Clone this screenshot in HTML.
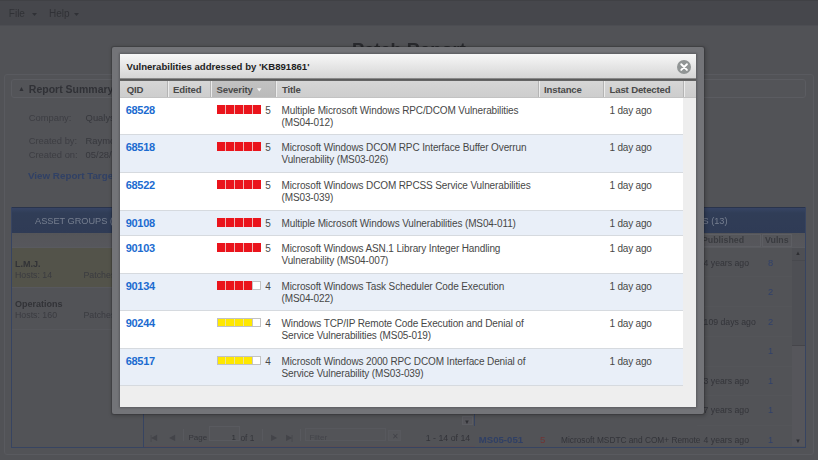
<!DOCTYPE html>
<html><head><meta charset="utf-8"><style>
*{box-sizing:border-box;margin:0;padding:0}
html,body{width:818px;height:460px;overflow:hidden;background:#55565b;font-family:"Liberation Sans",sans-serif;font-size:9.6px;color:#2c2d31}
.a{position:absolute}
.t{position:absolute;white-space:nowrap;line-height:12px}
.lbl{color:#404146}
.val{color:#3a3b40}
.hc{position:absolute;top:0;height:100%}
.hc span{position:absolute;left:6px;top:2.5px;font-weight:bold;color:#494949;letter-spacing:-0.15px;line-height:12px;white-space:nowrap}
.row{position:absolute;left:0;width:563px;border-bottom:1px solid #d6dadf}
.row.w{background:#fff}
.row.b{background:#e9eff8}
.qid{position:absolute;left:5.7px;top:6px;font-size:11px;letter-spacing:-0.3px;font-weight:bold;color:#1c6bd0;line-height:12px}
.bar{position:absolute;left:97px;top:7px;width:44px;height:9px;border:1px solid #c2c2c2;background:#fff}
.seg{position:absolute;top:-1px;height:9px;width:8px}
.num{position:absolute;left:145.3px;top:7px;font-size:10px;color:#4a4a4a;line-height:12px}
.ttl{position:absolute;left:161.5px;top:7px;font-size:10px;letter-spacing:-0.12px;color:#474747;line-height:11.8px;white-space:nowrap}
.ld{position:absolute;left:489.5px;top:7px;font-size:10px;letter-spacing:-0.2px;color:#474747;line-height:12px;white-space:nowrap}
</style></head><body>
<div class="a" style="left:0;top:0;width:818px;height:460px;background:#55565b;filter:brightness(0.95)">
<div class="a" style="left:0px;top:0px;width:818px;height:25px;background:#4a4b50;border-top:1px solid #434449"></div>
<div class="a" style="left:0px;top:25px;width:818px;height:1px;background:#505156"></div>
<div class="t" style="left:8.8px;top:7.5px;color:#333439;font-size:10px">File</div>
<svg class="a" style="left:31.5px;top:13px" width="5" height="3"><path d="M0 0H5L2.5 3Z" fill="#333439"/></svg>
<div class="t" style="left:49px;top:7.5px;color:#333439;font-size:10px">Help</div>
<svg class="a" style="left:73.5px;top:13px" width="5" height="3"><path d="M0 0H5L2.5 3Z" fill="#333439"/></svg>
<div class="t" style="left:352px;top:39.3px;font-size:18.3px;line-height:22px;font-weight:bold;color:#2b2c30">Patch Report</div>
<div class="a" style="left:3.5px;top:74px;width:810px;height:381px;border:1px solid #5e5f64;border-radius:3px;background:#56575c"></div>
<div class="a" style="left:11px;top:79px;width:795px;height:19px;border:1px solid #606166;border-radius:3px;background:#57585d"></div>
<div class="t" style="left:18px;top:83px;color:#333439"><span style="font-size:7px;position:relative;top:-1.5px">&#9650;</span></div>
<div class="t" style="left:28.8px;top:82px;font-size:10.5px;line-height:14px;font-weight:bold;color:#333439">Report Summary</div>
<div class="t lbl" style="left:28.7px;top:111.5px;font-size:9.4px">Company:</div>
<div class="t val" style="left:85.6px;top:111.5px;font-size:9.4px">Qualys, Inc.</div>
<div class="t lbl" style="left:28.7px;top:135px;font-size:9.4px">Created by:</div>
<div class="t val" style="left:85.6px;top:135px;font-size:9.4px">Raymond</div>
<div class="t lbl" style="left:28.7px;top:149px;font-size:9.4px">Created on:</div>
<div class="t val" style="left:85.6px;top:149px;font-size:9.4px">05/28/2010</div>
<div class="t" style="left:28px;top:169.5px;font-weight:bold;font-size:9.8px;color:#33446a">View Report Target</div>
<div class="a" style="left:11px;top:207px;width:795px;height:26px;background:linear-gradient(#3a4869,#33405c 5px,#313e59);border-top:1px solid #2c3750"></div>
<div class="t" style="left:35px;top:215px;color:#7c8597;font-size:9.2px">ASSET GROUPS (2)</div>
<div class="t" style="left:666.6px;top:215px;color:#7c8597;font-size:9.2px">PATCHES (13)</div>
<div class="a" style="left:12px;top:233px;width:793px;height:15px;background:linear-gradient(#58595e,#5b5c61);border-bottom:1px solid #5e5f64"></div>
<div class="a" style="left:12px;top:248px;width:131px;height:39px;background:#57574e"></div>
<div class="a" style="left:12px;top:287px;width:131px;height:1px;background:#5c5d62"></div>
<div class="a" style="left:12px;top:328.5px;width:131px;height:1px;background:#5b5c61"></div>
<div class="t" style="left:15px;top:257.5px;font-weight:bold;font-size:9px;color:#35363a">L.M.J.</div>
<div class="t" style="left:15px;top:268.5px;font-size:8.8px;color:#3e3f44">Hosts: 14</div>
<div class="t" style="left:83.5px;top:268.5px;font-size:8.8px;color:#3e3f44">Patches: 8</div>
<div class="t" style="left:15px;top:297.5px;font-weight:bold;font-size:9px;color:#35363a">Operations</div>
<div class="t" style="left:15px;top:308.5px;font-size:8.8px;color:#3e3f44">Hosts: 160</div>
<div class="t" style="left:83.5px;top:308.5px;font-size:8.8px;color:#3e3f44">Patches: 2</div>
<div class="a" style="left:11px;top:207px;width:1px;height:240px;background:#3a4866"></div>
<div class="a" style="left:11px;top:446.5px;width:795px;height:1px;background:#3a4866"></div>
<div class="a" style="left:805px;top:207px;width:1px;height:240px;background:#3a4866"></div>
<div class="a" style="left:142.5px;top:233px;width:1px;height:214px;background:#3a4866"></div>
<div class="a" style="left:474.3px;top:233px;width:1px;height:214px;background:#3a4866"></div>
<div class="a" style="left:143.5px;top:426px;width:331px;height:20.5px;background:#56575c;border-bottom:1px solid #5d5257"></div>
<div class="t" style="left:150px;top:431.5px;font-size:8px;color:#47484d;letter-spacing:-1px">|&#9664;</div>
<div class="t" style="left:168.5px;top:431.5px;font-size:8px;color:#47484d">&#9664;</div>
<div class="a" style="left:183px;top:429px;width:1px;height:12px;background:#5d5e63"></div>
<div class="t" style="left:188.4px;top:432px;font-size:8px;color:#38393e">Page</div>
<div class="a" style="left:209px;top:426px;width:31px;height:15px;border:1px solid #5e5f64;background:#57585d"></div>
<div class="t" style="left:231.5px;top:432px;font-size:8px;color:#303136">1</div>
<div class="t" style="left:240.4px;top:432px;font-size:8.4px;color:#38393e">of 1</div>
<div class="a" style="left:262px;top:429px;width:1px;height:12px;background:#5d5e63"></div>
<div class="t" style="left:271.3px;top:431.5px;font-size:8px;color:#47484d">&#9654;</div>
<div class="t" style="left:286px;top:431.5px;font-size:8px;color:#47484d;letter-spacing:-1px">&#9654;|</div>
<div class="a" style="left:300px;top:429px;width:1px;height:12px;background:#5d5e63"></div>
<div class="a" style="left:305px;top:428px;width:81px;height:13px;border:1px solid #5c5d62;background:#57585d"></div>
<div class="t" style="left:309.4px;top:432px;font-size:8px;color:#47484d">Filter</div>
<div class="a" style="left:388.3px;top:430px;width:13.2px;height:11px;border:1px solid #5c5d62;background:#595a5f"></div>
<div class="t" style="left:391.5px;top:430.5px;font-size:8px;color:#45464b">&#10005;</div>
<div class="t" style="left:425.7px;top:432px;font-size:8.8px;color:#36373c">1 - 14 of 14</div>
<div class="a" style="left:461.6px;top:416px;width:11px;height:9px;border:1px solid #606166;background:#5a5b60"></div>
<div class="t" style="left:464px;top:415.5px;font-size:6px;color:#303136">&#9660;</div>
<div class="t" style="left:702px;top:234.3px;font-weight:bold;color:#3d3e43;font-size:8.8px">Published</div>
<div class="a" style="left:697px;top:234px;width:64px;height:13px;border:1px solid #626368;border-left:none"></div>
<div class="a" style="left:762px;top:234px;width:30px;height:13px;border:1px solid #626368"></div>
<div class="t" style="left:765px;top:234.3px;font-weight:bold;color:#3d3e43;font-size:8.8px;width:27px;overflow:hidden">Vulns</div>
<div class="a" style="left:697px;top:275.9px;width:95px;height:1px;background:#58595e"></div>
<div class="a" style="left:697px;top:305.5px;width:95px;height:1px;background:#58595e"></div>
<div class="a" style="left:697px;top:336px;width:95px;height:1px;background:#58595e"></div>
<div class="a" style="left:697px;top:365.6px;width:95px;height:1px;background:#58595e"></div>
<div class="a" style="left:697px;top:395.4px;width:95px;height:1px;background:#58595e"></div>
<div class="a" style="left:697px;top:425px;width:95px;height:1px;background:#58595e"></div>
<div class="t" style="left:703.6px;top:256.7px;color:#36373c;font-size:8.7px">4 years ago</div>
<div class="t" style="left:768px;top:256.7px;color:#34456f;font-size:9.4px">8</div>
<div class="t" style="left:768px;top:286.2px;color:#34456f;font-size:9.4px">2</div>
<div class="t" style="left:703.6px;top:315.7px;color:#36373c;font-size:8.7px">109 days ago</div>
<div class="t" style="left:768px;top:315.7px;color:#34456f;font-size:9.4px">2</div>
<div class="t" style="left:768px;top:345.2px;color:#34456f;font-size:9.4px">1</div>
<div class="t" style="left:703.6px;top:374.7px;color:#36373c;font-size:8.7px">3 years ago</div>
<div class="t" style="left:768px;top:374.7px;color:#34456f;font-size:9.4px">1</div>
<div class="t" style="left:703.6px;top:404.2px;color:#36373c;font-size:8.7px">7 years ago</div>
<div class="t" style="left:768px;top:404.2px;color:#34456f;font-size:9.4px">1</div>
<div class="t" style="left:703.6px;top:433.7px;color:#36373c;font-size:8.7px">4 years ago</div>
<div class="t" style="left:768px;top:433.7px;color:#34456f;font-size:9.4px">1</div>
<div class="t" style="left:478.8px;top:434px;font-weight:bold;color:#32436a">MS05-051</div>
<div class="t" style="left:540px;top:434px;color:#763838">5</div>
<div class="t" style="left:561px;top:434px;color:#36373c;font-size:8.3px;width:141px;overflow:hidden">Microsoft MSDTC and COM+ Remote</div>
<div class="a" style="left:792px;top:248px;width:13px;height:198px;background:#5a5b60"></div>
<div class="a" style="left:792px;top:248px;width:13px;height:98px;background:#525358;border-bottom:1px solid #49494e"></div>
<div class="t" style="left:795px;top:246.5px;font-size:6px;color:#303136">&#9650;</div>
<div class="a" style="left:792px;top:259.5px;width:13px;height:1px;background:#4c4d52"></div>
<div class="t" style="left:795px;top:435px;font-size:6px;color:#303136">&#9660;</div>
</div>
<div class="a" style="left:112px;top:46.5px;width:592px;height:367.5px;background:#737478;border-radius:2px;box-shadow:1px 1px 4px 1px rgba(0,0,0,0.2),0 0 1px 0.5px rgba(0,0,0,0.15)"></div>
<div class="a" style="left:120px;top:54px;width:576px;height:352.5px;background:#eeeeee;overflow:hidden;box-shadow:0 0 2px 1px rgba(0,0,0,0.22)">
<div class="a" style="left:0px;top:0px;width:576px;height:24px;background:linear-gradient(#f7f7f7,#d6d6d6)"></div>
<div class="t" style="left:6.6px;top:6.5px;font-weight:bold;color:#1e1e1e">Vulnerabilities addressed by 'KB891861'</div>
<div class="a" style="left:557px;top:5.6px;width:14.2px;height:14.2px;border-radius:50%;background:#919595"></div>
<svg class="a" style="left:557px;top:5.6px" width="14.2" height="14.2" viewBox="0 0 14 14"><path d="M4.2 4.2L9.8 9.8M9.8 4.2L4.2 9.8" stroke="#fff" stroke-width="1.9" stroke-linecap="round"/></svg>
<div class="a" style="left:0px;top:24px;width:576px;height:1px;background:#8a8a8a"></div>
<div class="a" style="left:0px;top:25px;width:576px;height:1px;background:#5b5b5b"></div>
<div class="a" style="left:0px;top:26px;width:576px;height:1px;background:#646464"></div>
<div class="a" style="left:0;top:27px;width:576px;height:17px;background:linear-gradient(#d6d6d6,#cdcdcd);border-bottom:1px solid #c2c2c2"><div class="hc" style="left:0px;width:47px;"><span style="left:6.8px">QID</span></div><div class="hc" style="left:47px;width:43px;border-left:1px solid #b4b4b4;box-shadow:inset 1px 0 0 #ececec;"><span style="left:5px">Edited</span></div><div class="hc" style="left:90px;width:65px;border-left:1px solid #b4b4b4;box-shadow:inset 1px 0 0 #ececec;background:linear-gradient(#c2c2c2,#bababa)"><span style="left:5.5px">Severity</span></div><div class="hc" style="left:155px;width:263px;border-left:1px solid #b4b4b4;box-shadow:inset 1px 0 0 #ececec;"><span style="left:6px">Title</span></div><div class="hc" style="left:418px;width:65px;border-left:1px solid #b4b4b4;box-shadow:inset 1px 0 0 #ececec;"><span style="left:5px">Instance</span></div><div class="hc" style="left:483px;width:80px;border-left:1px solid #b4b4b4;box-shadow:inset 1px 0 0 #ececec;"><span style="left:5.5px">Last Detected</span></div><div class="hc" style="left:563px;width:13px;border-left:1px solid #b4b4b4;box-shadow:inset 1px 0 0 #ececec;"><span style="left:-1px"></span></div><svg class="a" style="left:137px;top:7px" width="4.5" height="4" viewBox="0 0 4.5 4"><path d="M0 0.3H4.5L2.25 3.5Z" fill="#f4f4f4"/></svg></div>
<div class="row w" style="top:44.0px;height:37.0px"><span class="qid">68528</span><span class="bar"><i class="a" style="left:-1px;top:-1px;width:8px;height:9px;background:#ea141c"></i><i class="a" style="left:8px;top:-1px;width:8px;height:9px;background:#ea141c"></i><i class="a" style="left:7px;top:-1px;width:1px;height:9px;background:#efb4b4"></i><i class="a" style="left:17px;top:-1px;width:8px;height:9px;background:#ea141c"></i><i class="a" style="left:16px;top:-1px;width:1px;height:9px;background:#efb4b4"></i><i class="a" style="left:26px;top:-1px;width:8px;height:9px;background:#ea141c"></i><i class="a" style="left:25px;top:-1px;width:1px;height:9px;background:#efb4b4"></i><i class="a" style="left:35px;top:-1px;width:8px;height:9px;background:#ea141c"></i><i class="a" style="left:34px;top:-1px;width:1px;height:9px;background:#efb4b4"></i></span><span class="num">5</span><span class="ttl">Multiple Microsoft Windows RPC/DCOM Vulnerabilities<br>(MS04-012)</span><span class="ld">1 day ago</span></div>
<div class="row b" style="top:81.0px;height:38.0px"><span class="qid">68518</span><span class="bar"><i class="a" style="left:-1px;top:-1px;width:8px;height:9px;background:#ea141c"></i><i class="a" style="left:8px;top:-1px;width:8px;height:9px;background:#ea141c"></i><i class="a" style="left:7px;top:-1px;width:1px;height:9px;background:#efb4b4"></i><i class="a" style="left:17px;top:-1px;width:8px;height:9px;background:#ea141c"></i><i class="a" style="left:16px;top:-1px;width:1px;height:9px;background:#efb4b4"></i><i class="a" style="left:26px;top:-1px;width:8px;height:9px;background:#ea141c"></i><i class="a" style="left:25px;top:-1px;width:1px;height:9px;background:#efb4b4"></i><i class="a" style="left:35px;top:-1px;width:8px;height:9px;background:#ea141c"></i><i class="a" style="left:34px;top:-1px;width:1px;height:9px;background:#efb4b4"></i></span><span class="num">5</span><span class="ttl">Microsoft Windows DCOM RPC Interface Buffer Overrun<br>Vulnerability (MS03-026)</span><span class="ld">1 day ago</span></div>
<div class="row w" style="top:119.0px;height:38.0px"><span class="qid">68522</span><span class="bar"><i class="a" style="left:-1px;top:-1px;width:8px;height:9px;background:#ea141c"></i><i class="a" style="left:8px;top:-1px;width:8px;height:9px;background:#ea141c"></i><i class="a" style="left:7px;top:-1px;width:1px;height:9px;background:#efb4b4"></i><i class="a" style="left:17px;top:-1px;width:8px;height:9px;background:#ea141c"></i><i class="a" style="left:16px;top:-1px;width:1px;height:9px;background:#efb4b4"></i><i class="a" style="left:26px;top:-1px;width:8px;height:9px;background:#ea141c"></i><i class="a" style="left:25px;top:-1px;width:1px;height:9px;background:#efb4b4"></i><i class="a" style="left:35px;top:-1px;width:8px;height:9px;background:#ea141c"></i><i class="a" style="left:34px;top:-1px;width:1px;height:9px;background:#efb4b4"></i></span><span class="num">5</span><span class="ttl">Microsoft Windows DCOM RPCSS Service Vulnerabilities<br>(MS03-039)</span><span class="ld">1 day ago</span></div>
<div class="row b" style="top:157.0px;height:25.0px"><span class="qid">90108</span><span class="bar"><i class="a" style="left:-1px;top:-1px;width:8px;height:9px;background:#ea141c"></i><i class="a" style="left:8px;top:-1px;width:8px;height:9px;background:#ea141c"></i><i class="a" style="left:7px;top:-1px;width:1px;height:9px;background:#efb4b4"></i><i class="a" style="left:17px;top:-1px;width:8px;height:9px;background:#ea141c"></i><i class="a" style="left:16px;top:-1px;width:1px;height:9px;background:#efb4b4"></i><i class="a" style="left:26px;top:-1px;width:8px;height:9px;background:#ea141c"></i><i class="a" style="left:25px;top:-1px;width:1px;height:9px;background:#efb4b4"></i><i class="a" style="left:35px;top:-1px;width:8px;height:9px;background:#ea141c"></i><i class="a" style="left:34px;top:-1px;width:1px;height:9px;background:#efb4b4"></i></span><span class="num">5</span><span class="ttl">Multiple Microsoft Windows Vulnerabilities (MS04-011)</span><span class="ld">1 day ago</span></div>
<div class="row w" style="top:182.0px;height:38.0px"><span class="qid">90103</span><span class="bar"><i class="a" style="left:-1px;top:-1px;width:8px;height:9px;background:#ea141c"></i><i class="a" style="left:8px;top:-1px;width:8px;height:9px;background:#ea141c"></i><i class="a" style="left:7px;top:-1px;width:1px;height:9px;background:#efb4b4"></i><i class="a" style="left:17px;top:-1px;width:8px;height:9px;background:#ea141c"></i><i class="a" style="left:16px;top:-1px;width:1px;height:9px;background:#efb4b4"></i><i class="a" style="left:26px;top:-1px;width:8px;height:9px;background:#ea141c"></i><i class="a" style="left:25px;top:-1px;width:1px;height:9px;background:#efb4b4"></i><i class="a" style="left:35px;top:-1px;width:8px;height:9px;background:#ea141c"></i><i class="a" style="left:34px;top:-1px;width:1px;height:9px;background:#efb4b4"></i></span><span class="num">5</span><span class="ttl">Microsoft Windows ASN.1 Library Integer Handling<br>Vulnerability (MS04-007)</span><span class="ld">1 day ago</span></div>
<div class="row b" style="top:220.0px;height:37.0px"><span class="qid">90134</span><span class="bar"><i class="a" style="left:-1px;top:-1px;width:8px;height:9px;background:#ea141c"></i><i class="a" style="left:8px;top:-1px;width:8px;height:9px;background:#ea141c"></i><i class="a" style="left:7px;top:-1px;width:1px;height:9px;background:#efb4b4"></i><i class="a" style="left:17px;top:-1px;width:8px;height:9px;background:#ea141c"></i><i class="a" style="left:16px;top:-1px;width:1px;height:9px;background:#efb4b4"></i><i class="a" style="left:26px;top:-1px;width:8px;height:9px;background:#ea141c"></i><i class="a" style="left:25px;top:-1px;width:1px;height:9px;background:#efb4b4"></i><i class="a" style="left:34px;top:0;width:1px;height:7px;background:#c6c6c6"></i></span><span class="num">4</span><span class="ttl">Microsoft Windows Task Scheduler Code Execution<br>(MS04-022)</span><span class="ld">1 day ago</span></div>
<div class="row w" style="top:257.0px;height:38.0px"><span class="qid">90244</span><span class="bar"><i class="a" style="left:0px;top:0;width:7px;height:7px;background:#ffe800"></i><i class="a" style="left:8px;top:0;width:8px;height:7px;background:#ffe800"></i><i class="a" style="left:7px;top:0px;width:1px;height:7px;background:#e9e29a"></i><i class="a" style="left:17px;top:0;width:8px;height:7px;background:#ffe800"></i><i class="a" style="left:16px;top:0px;width:1px;height:7px;background:#e9e29a"></i><i class="a" style="left:26px;top:0;width:8px;height:7px;background:#ffe800"></i><i class="a" style="left:25px;top:0px;width:1px;height:7px;background:#e9e29a"></i><i class="a" style="left:34px;top:0;width:1px;height:7px;background:#c6c6c6"></i></span><span class="num">4</span><span class="ttl">Windows TCP/IP Remote Code Execution and Denial of<br>Service Vulnerabilities (MS05-019)</span><span class="ld">1 day ago</span></div>
<div class="row b" style="top:295.0px;height:37.0px"><span class="qid">68517</span><span class="bar"><i class="a" style="left:0px;top:0;width:7px;height:7px;background:#ffe800"></i><i class="a" style="left:8px;top:0;width:8px;height:7px;background:#ffe800"></i><i class="a" style="left:7px;top:0px;width:1px;height:7px;background:#e9e29a"></i><i class="a" style="left:17px;top:0;width:8px;height:7px;background:#ffe800"></i><i class="a" style="left:16px;top:0px;width:1px;height:7px;background:#e9e29a"></i><i class="a" style="left:26px;top:0;width:8px;height:7px;background:#ffe800"></i><i class="a" style="left:25px;top:0px;width:1px;height:7px;background:#e9e29a"></i><i class="a" style="left:34px;top:0;width:1px;height:7px;background:#c6c6c6"></i></span><span class="num">4</span><span class="ttl">Microsoft Windows 2000 RPC DCOM Interface Denial of<br>Service Vulnerability (MS03-039)</span><span class="ld">1 day ago</span></div>
</div>
</body></html>
